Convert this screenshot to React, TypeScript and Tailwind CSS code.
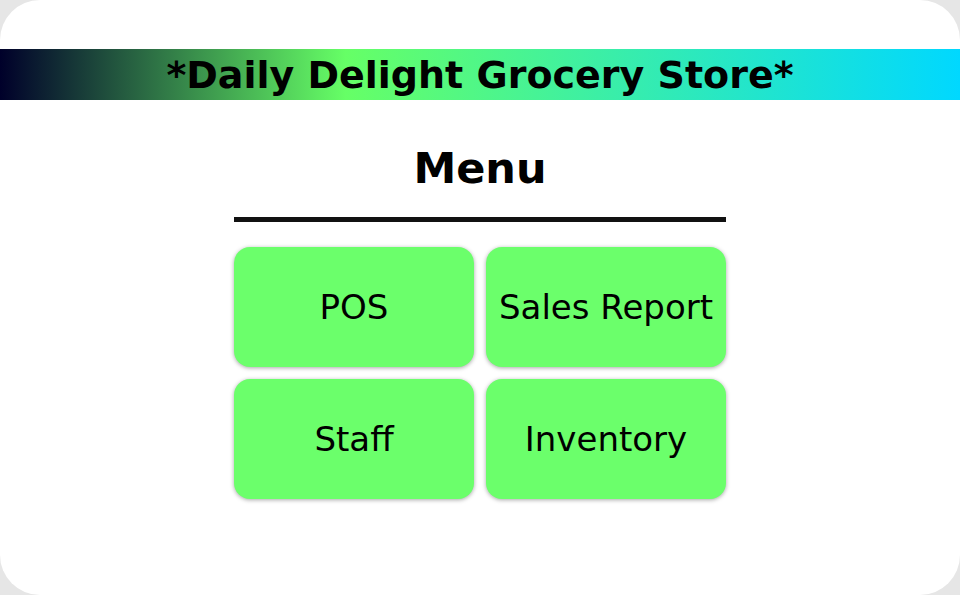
export default function App() {
  const items = ["POS", "Sales Report", "Staff", "Inventory"];

  return (
    <div className="h-[595px] w-[960px] bg-[#e6e6e6] font-['DejaVu_Sans',sans-serif] text-black">
      <div className="flex h-full w-full flex-col items-center rounded-[40px] bg-white pt-[49px]">
        <div className="flex h-[51px] w-full items-center justify-center bg-[linear-gradient(to_right,#00002a_0%,#66ff66_36%,#00d8ff_100%)]">
          <h1 className="text-[38px] font-bold leading-none">*Daily Delight Grocery Store*</h1>
        </div>

        <h2 className="mt-[47px] text-[43px] font-bold leading-none">Menu</h2>

        <div className="mt-[27px] h-[5px] w-[492px] bg-[#111111]" />

        <div className="mt-[25px] grid grid-cols-2 gap-3">
          {items.map((item) => (
            <button
              key={item}
              className="flex h-[120px] w-[240px] items-center justify-center rounded-[16px] bg-[#6bff6b] text-[34px] shadow-[0_1px_4px_rgba(0,0,0,0.35)]"
            >
              {item}
            </button>
          ))}
        </div>
      </div>
    </div>
  );
}
